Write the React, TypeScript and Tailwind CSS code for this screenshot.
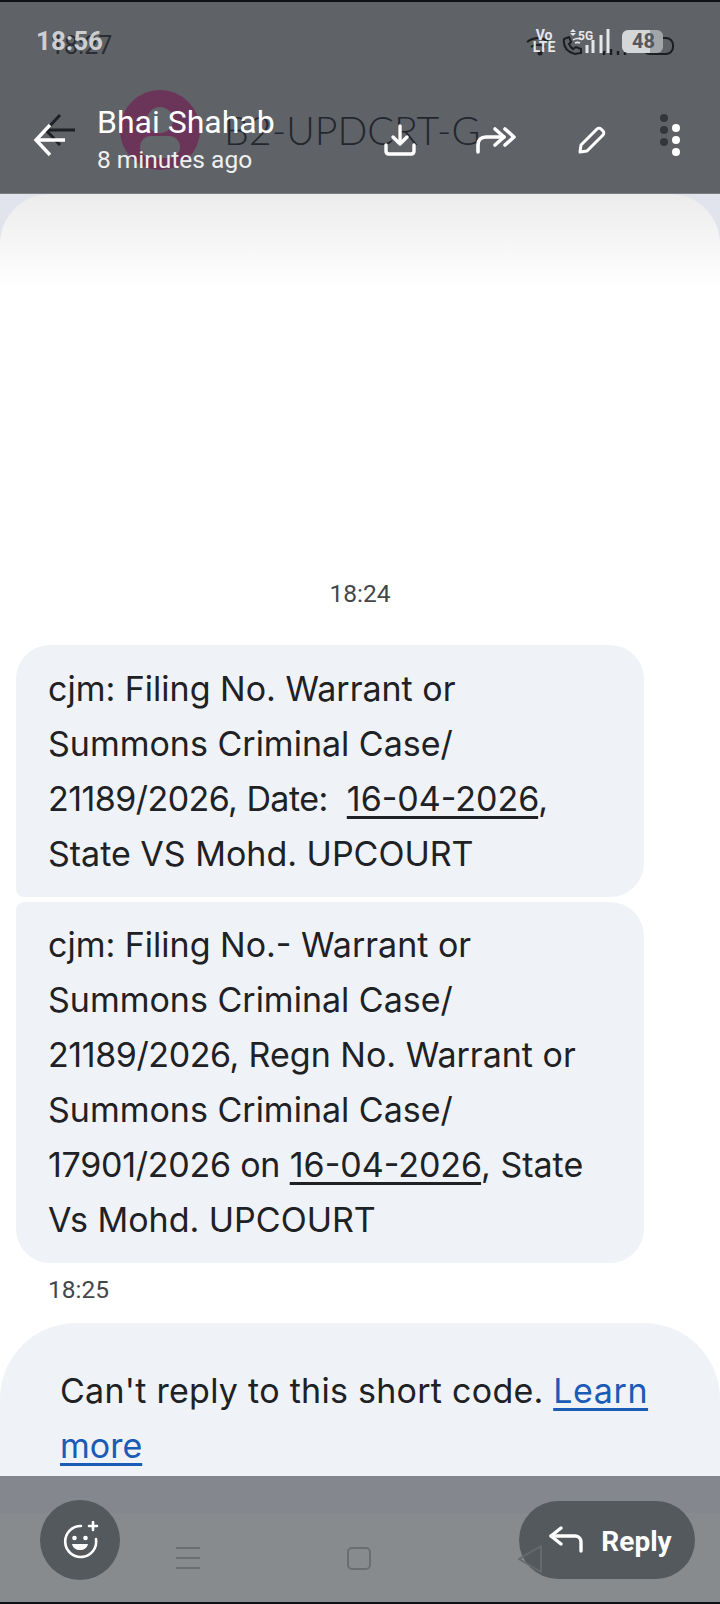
const font = "font-['Roboto',sans-serif]";
const bodyText = "font-['Inter',sans-serif] text-[34px] leading-[55px]";

const Underlined = ({ children }: { children: string }) => (
  <span className="underline decoration-[2.5px] underline-offset-[5px]">{children}</span>
);

const Dots = ({ className }: { className: string }) => (
  <div className={`flex flex-col gap-[4px] ${className}`}>
    <div className="w-[8px] h-[8px] rounded-full bg-current" />
    <div className="w-[8px] h-[8px] rounded-full bg-current" />
    <div className="w-[8px] h-[8px] rounded-full bg-current" />
  </div>
);

const BackArrow = ({ color, width }: { color: string; width: number }) => (
  <svg width="32" height="34" viewBox="0 0 32 34" fill="none" stroke={color} strokeWidth={width}>
    <path d="M17 2L3 17l14 15M3 17h29" />
  </svg>
);

const StatusGhost = () => (
  <>
    <span className="absolute left-[50px] top-[32px] text-[25px] leading-[28px] text-[#2a2d31]">18:27</span>
    <svg className="absolute left-[526px] top-[36px]" width="150" height="20" viewBox="0 0 150 20" fill="none" stroke="#1c1f22" strokeWidth="2">
      <path d="M1 6c7-5 15-5 22 0M5 11c4-3 10-3 14 0" />
      <circle cx="14" cy="17" r="1.500" fill="#1c1f22" />
      <path d="M38 3c-1 8 3 13 11 15l6-1v-4l-5-2-3 2c-2-1-3-3-4-5l2-2-2-5z" />
      <path d="M78 19v-4M85 19v-6M92 19v-4M99 19v-6" strokeWidth="2.500" />
      <rect x="117" y="2" width="30" height="16" rx="7" />
    </svg>
    <span className="absolute left-[648px] top-[37px] text-[15px] leading-[18px] text-[#3a3d40]">51</span>
  </>
);

const StatusIcons = () => (
  <div className="flex items-center">
    <div className="flex flex-col items-center text-[14px] leading-[12px] font-bold text-[#e6e7e8] w-[22px]">
      <span>Vo</span>
      <span>LTE</span>
    </div>
    <svg className="ml-[7px]" width="50" height="26" viewBox="0 0 50 26" fill="none" stroke="#e6e7e8">
      <path d="M11 1l3 3H8zM11 8l3-3H8z" fill="#e6e7e8" stroke="none" />
      <path d="M11 12c3-2 6-2 9 0M13 15c2-1 3-1 5 0" strokeWidth="1.500" />
      <path d="M25 25v-8M31 25v-13M39 25V7M46 25V1" strokeWidth="3" />
    </svg>
    <span className="absolute left-[578px] top-[27px] text-[12px] leading-[14px] font-bold text-[#e6e7e8]">5G</span>
    <div className="ml-[10px] w-[41px] h-[23px] rounded-[6px] bg-[linear-gradient(to_right,#d5d6d8_0,#d5d6d8_68%,#a3a6a8_68%)] flex items-center pl-[10px] text-[20px] leading-[22px] font-bold text-[#54585c]">
      48
    </div>
  </div>
);

const DownloadIcon = () => (
  <svg width="32" height="32" viewBox="0 0 32 32" fill="none" stroke="white" strokeWidth="3.400" strokeLinecap="round" strokeLinejoin="round">
    <path d="M16 2v17M9 13l7 7 7-7" />
    <path d="M2 21v6c0 2 1 3 3 3h22c2 0 3-1 3-3v-6" />
  </svg>
);

const PencilIcon = () => (
  <svg width="28" height="28" viewBox="0 0 28 28" fill="none" stroke="white" strokeWidth="3" strokeLinejoin="round">
    <path d="M2 26l1-7L19 3c1-1 3-1 4 0l2 2c1 1 1 3 0 4L9 25z" />
  </svg>
);

const ForwardAll = () => (
  <svg width="40" height="28" viewBox="0 0 40 28" fill="none" stroke="white" strokeWidth="3.600" strokeLinecap="round" strokeLinejoin="round">
    <path d="M2 26v-7c0-5 3-8 8-8h18" />
    <path d="M19 3l9 8-9 8" />
    <path d="M29 3l9 8-9 8" />
  </svg>
);

const EmojiPlus = () => (
  <svg width="38" height="38" viewBox="0 0 38 38" fill="none" stroke="white" strokeWidth="2.600" strokeLinecap="round">
    <path d="M20 5a15.500 15.500 0 1 0 15 13" />
    <circle cx="13.500" cy="17" r="2.300" fill="white" stroke="none" />
    <circle cx="24.500" cy="17" r="2.300" fill="white" stroke="none" />
    <path d="M11 23h16c-1 4-4 6-8 6s-7-2-8-6z" fill="white" stroke="none" />
    <path d="M32 1v8M28 5h8" />
  </svg>
);

const ReplyArrow = () => (
  <svg width="36" height="28" viewBox="0 0 36 28" fill="none" stroke="white" strokeWidth="3.400" strokeLinecap="round" strokeLinejoin="round">
    <path d="M13 2L3 10l10 8" />
    <path d="M3 10h24c3 0 6 2 6 6v9" />
  </svg>
);

export default function App() {
  return (
    <div className={`${font} relative w-[720px] h-[1604px] overflow-hidden flex flex-col bg-white text-[#202124]`}>
      <div className="h-[2px] bg-[#0d1116]" />

      {/* top bar, with the page behind it showing through */}
      <header className="relative h-[192px] bg-[#5f6368] border-b border-[#7a7d82] text-white">
        <div className="absolute inset-x-0 -top-[2px] h-[194px]">
          <StatusGhost />
          <div className="absolute left-[120px] top-[90px] w-[80px] h-[80px] rounded-full bg-[#6b3459] overflow-hidden">
            <div className="absolute left-[27px] top-[17px] w-[26px] h-[26px] rounded-full bg-[#626569]" />
            <div className="absolute left-[20px] top-[46px] w-[40px] h-[22px] rounded-full bg-[#626569]" />
          </div>
          <span className="absolute left-[224px] top-[104px] text-[39.300px] leading-[52px] font-light whitespace-nowrap text-[#23272d] font-['Lato',sans-serif]">
            B2-UPDCRT-G
          </span>
          <div className="absolute left-[43px] top-[113px]">
            <BackArrow color="#1d2024" width={3} />
          </div>
          <Dots className="absolute left-[660px] top-[114px] text-[#33363a]" />
        </div>

        <div className="relative flex flex-col">
          <div className="flex items-center justify-between h-[54px] pt-[24px] pl-[36px] pr-[57px]">
            <span className="text-[26px] leading-[30px] font-bold text-[#dcdee0]/90">18:56</span>
            <StatusIcons />
          </div>
          <div className="flex items-center mt-[47px] pl-[33px]">
            <BackArrow color="white" width={3.4} />
            <div className="ml-[32px] w-[287px] flex flex-col">
              <span className="text-[32px] leading-[38px] whitespace-nowrap">Bhai Shahab</span>
              <span className="mt-[3px] text-[24.500px] leading-[32px] whitespace-nowrap text-[#f0f0f0]">8 minutes ago</span>
            </div>
            <DownloadIcon />
            <div className="ml-[60px]"><ForwardAll /></div>
            <div className="ml-[62px]"><PencilIcon /></div>
            <Dots className="ml-[66px] text-white" />
          </div>
        </div>
      </header>

      <main className="flex-1 min-h-0 overflow-hidden bg-[#e1e4ec]">
        <div className="h-full rounded-t-[50px] bg-[linear-gradient(to_bottom,#ececed_0,#ffffff_95px)] flex flex-col">
          <div className="text-center text-[24.500px] leading-[32px] text-[#44474a] mt-[384px]">18:24</div>

          <div className={`mt-[35px] ml-[16px] w-[628px] pt-[16px] pb-[16px] pl-[32px] rounded-t-[34px] rounded-br-[34px] rounded-bl-[8px] bg-[#eff2f7] ${bodyText}`}>
            cjm: Filing No. Warrant or<br />
            Summons Criminal Case/<br />
            <span className="tracking-[-0.550px]">21189/2026, Date:</span>&nbsp; <Underlined>16-04-2026</Underlined>,<br />
            State VS Mohd. UPCOURT
          </div>
          <div className={`mt-[5px] ml-[16px] w-[628px] pt-[15px] pb-[16px] pl-[32px] rounded-b-[34px] rounded-tr-[34px] rounded-tl-[8px] bg-[#eff2f7] ${bodyText}`}>
            cjm: Filing No.- Warrant or<br />
            Summons Criminal Case/<br />
            <span className="tracking-[-0.400px]">21189/2026,</span> Regn No. Warrant or<br />
            Summons Criminal Case/<br />
            <span className="tracking-[-0.250px]">17901/2026 on</span> <Underlined>16-04-2026</Underlined>, State<br />
            Vs Mohd. UPCOURT
          </div>

          <div className="mt-[11px] ml-[48px] text-[24.500px] leading-[32px] text-[#44474a]">18:25</div>

          <div className={`mt-[17px] flex-1 rounded-t-[76px] bg-[#eff2f7] pt-[40px] pl-[60px] ${bodyText}`}>
            <span className="tracking-[0.270px]">Can't reply to this short code.</span>{" "}
            <span className="tracking-[0.600px] text-[#1a5bb5] underline decoration-[2.5px] underline-offset-[5px]">Learn</span>
            <br />
            <span className="text-[#1a5bb5] underline decoration-[2.5px] underline-offset-[5px]">more</span>
          </div>
        </div>
      </main>

      {/* bottom bar */}
      <footer className="relative">
        <div className="h-[37px] bg-[#84878d]" />
        <div className="h-[89px] bg-[#888b8e] flex items-start justify-between pt-[34px] pl-[176px] pr-[177px]">
          <div className="flex flex-col gap-[8px] w-[24px]">
            <div className="h-[2px] bg-[#6b6e71]" />
            <div className="h-[2px] bg-[#6b6e71]" />
            <div className="h-[2px] bg-[#6b6e71]" />
          </div>
          <div className="w-[24px] h-[23px] rounded-[5px] border-[2px] border-[#6b6e71]" />
          <svg className="relative z-10 -mt-[2px]" width="26" height="28" viewBox="0 0 26 28" fill="none" stroke="#666a6d" strokeWidth="2" strokeLinejoin="round">
            <path d="M2 14L24 1v26z" />
          </svg>
        </div>
        <div className="absolute left-[40px] top-[24px] w-[80px] h-[80px] rounded-full bg-[#54595d] flex items-center justify-center">
          <EmojiPlus />
        </div>
        <div className="absolute left-[519px] top-[25px] w-[176px] h-[78px] pl-[6px] rounded-full bg-[#54595d] flex items-center justify-center gap-[17px] text-white text-[28px] font-bold">
          <ReplyArrow />
          <span className="pt-[3px]">Reply</span>
        </div>
      </footer>

      <div className="h-[2px] bg-[#0d1116]" />
    </div>
  );
}
